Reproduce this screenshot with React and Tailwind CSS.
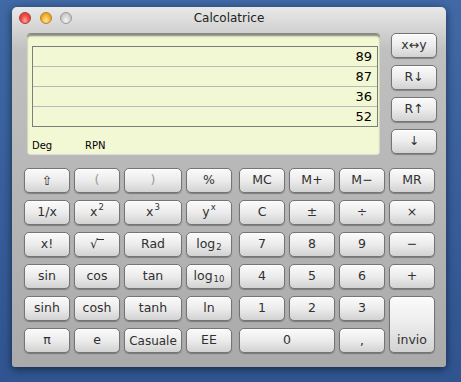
import React from "react";

const font = { fontFamily: '"DejaVu Sans", "Liberation Sans", sans-serif' };

function Btn({ children, className = "", dim = false }) {
  return (
    <div
      className={
        "h-[25px] rounded-[5px] border border-[#747474] bg-linear-to-b from-[#fbfbfb] via-[#ececec] to-[#d2d2d2] shadow-[0_1px_1px_rgba(0,0,0,0.3),inset_0_1px_0_#ffffff] flex items-center justify-center text-[12.5px] leading-none " +
        (dim ? "text-[#9a9a9a] " : "text-[#303030] ") +
        className
      }
    >
      {children}
    </div>
  );
}

const Sup = ({ children }) => (
  <span className="text-[8.5px] relative -top-[5px] ml-[1px]">{children}</span>
);
const Sub = ({ children }) => (
  <span className="text-[8.5px] relative top-[3px] ml-[1px]">{children}</span>
);

export default function App() {
  const stack = ["89", "87", "36", "52"];
  return (
    <div
      style={font}
      className="w-[461px] h-[382px] overflow-hidden bg-linear-to-b from-[#4069a6] to-[#2f5490] pl-[12px] pt-[7px]"
    >
      <div className="w-[434px] h-[360px] rounded-t-[5px] rounded-b-[3px] overflow-hidden shadow-[0_2px_8px_rgba(0,0,0,0.55)] bg-linear-to-b from-[#e9e9e9] via-[#c0c0c0] via-[12%] to-[#aaaaaa] flex flex-col">
        {/* title bar */}
        <div className="h-[22px] grid grid-cols-[1fr_auto_1fr] items-center">
          <div className="flex items-center gap-[8.5px] pl-[7px]">
            <div className="w-[12px] h-[12px] rounded-full border border-[#b33a3a] bg-radial-[at_50%_75%] from-[#ffa3a0] via-[#f0504a] to-[#c9302c]" />
            <div className="w-[12px] h-[12px] rounded-full border border-[#b7802a] bg-radial-[at_50%_75%] from-[#ffe3a0] via-[#f5b434] to-[#d58b12]" />
            <div className="w-[12px] h-[12px] rounded-full border border-[#9a9a9a] bg-radial-[at_50%_75%] from-[#f5f5f5] via-[#d4d4d4] to-[#b0b0b0]" />
          </div>
          <div className="text-[12px] text-[#222]">Calcolatrice</div>
          <div />
        </div>

        {/* top section */}
        <div className="flex pt-[4px] pl-[15px]">
          <div className="w-[353px] h-[121px] rounded-[4px] bg-[#f2f7d4] shadow-[inset_0_2px_2px_rgba(0,0,0,0.45),0_1px_0_rgba(255,255,255,0.5)] border-t border-[#8a8a8a] pl-[5px] pt-[12px]">
            <div className="w-[346px] h-[81px] border border-[#7d7d7d] flex flex-col">
              {stack.map((v, i) => (
                <div
                  key={i}
                  className={
                    "flex items-center justify-end pr-[5px] text-[13px] text-black " +
                    (i < 3 ? "border-b border-[#b8b8b8] h-[20px]" : "h-[19px]")
                  }
                >
                  {v}
                </div>
              ))}
            </div>
            <div className="flex items-center h-[14px] mt-[11px] text-[10px] text-black">
              <div className="w-[53px]">Deg</div>
              <div>RPN</div>
            </div>
          </div>
          <div className="ml-[11px] w-[46px] flex flex-col gap-[7px]">
            <Btn className="text-[11px]">x↔y</Btn>
            <Btn>R↓</Btn>
            <Btn>R↑</Btn>
            <Btn>↓</Btn>
          </div>
        </div>

        {/* keypad */}
        <div className="flex pl-[12px] mt-[14px] gap-[7px]">
          <div className="grid grid-cols-[46px_46px_58px_46px] grid-rows-[repeat(6,25px)] gap-x-[4px] gap-y-[7px]">
            <Btn className="text-[13px]">⇧</Btn>
            <Btn dim>(</Btn>
            <Btn dim>)</Btn>
            <Btn>%</Btn>

            <Btn>1/x</Btn>
            <Btn>
              x<Sup>2</Sup>
            </Btn>
            <Btn>
              x<Sup>3</Sup>
            </Btn>
            <Btn>
              y<Sup>x</Sup>
            </Btn>

            <Btn>x!</Btn>
            <Btn>
              <span>√</span>
              <span className="inline-block w-[7px] h-[9px] border-t border-[#333] -ml-[1px] relative top-[-1px]" />
            </Btn>
            <Btn>Rad</Btn>
            <Btn>
              log<Sub>2</Sub>
            </Btn>

            <Btn>sin</Btn>
            <Btn>cos</Btn>
            <Btn>tan</Btn>
            <Btn>
              log<Sub>10</Sub>
            </Btn>

            <Btn>sinh</Btn>
            <Btn>cosh</Btn>
            <Btn>tanh</Btn>
            <Btn>ln</Btn>

            <Btn>π</Btn>
            <Btn>e</Btn>
            <Btn className="text-[12px]">Casuale</Btn>
            <Btn>EE</Btn>
          </div>

          <div className="grid grid-cols-[repeat(4,46px)] grid-rows-[repeat(6,25px)] gap-x-[4px] gap-y-[7px]">
            <Btn>MC</Btn>
            <Btn>M+</Btn>
            <Btn>M−</Btn>
            <Btn>MR</Btn>

            <Btn>C</Btn>
            <Btn>±</Btn>
            <Btn>÷</Btn>
            <Btn>×</Btn>

            <Btn>7</Btn>
            <Btn>8</Btn>
            <Btn>9</Btn>
            <Btn>−</Btn>

            <Btn>4</Btn>
            <Btn>5</Btn>
            <Btn>6</Btn>
            <Btn>+</Btn>

            <Btn>1</Btn>
            <Btn>2</Btn>
            <Btn>3</Btn>
            <Btn className="row-span-2 h-auto items-end pb-[6px]">invio</Btn>

            <Btn className="col-span-2">0</Btn>
            <Btn className="items-end pb-[5px]">,</Btn>
          </div>
        </div>
      </div>
    </div>
  );
}
